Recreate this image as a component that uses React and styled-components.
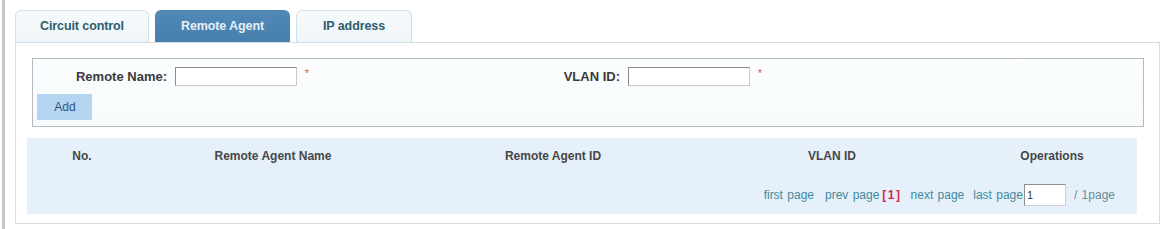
import React from "react";
import styled, { createGlobalStyle } from "styled-components";

const Global = createGlobalStyle`
  html, body { margin: 0; padding: 0; background: #ffffff; }
  body { font-family: "Liberation Sans", Arial, sans-serif; }
  * { box-sizing: border-box; }
`;

const Page = styled.div`
  margin-left: 2px;
  height: 229px;
  border-left: 3px solid #c6c6c6;
  padding-left: 10px;
  padding-top: 10px;
  width: 1160px;
`;

const TabBar = styled.div`
  display: flex;
  gap: 6px;
`;

const Tab = styled.div`
  width: ${(p) => p.$w}px;
  height: 32px;
  display: flex;
  align-items: center;
  justify-content: center;
  padding-bottom: 1px;
  border: 1px solid ${(p) => (p.$active ? "#4a84b2" : "#d2dfe6")};
  border-bottom: none;
  border-radius: 6px 6px 0 0;
  background: ${(p) =>
    p.$active ? "linear-gradient(#5089b6, #4780ae)" : "linear-gradient(#f6fafc, #eef5f9)"};
  color: ${(p) => (p.$active ? "#e6eef7" : "#2f5d6c")};
  font-size: 12.5px;
  font-weight: bold;
  letter-spacing: -0.1px;
`;

const Panel = styled.div`
  width: 1145px;
  height: 182px;
  border: 1px solid #d5dde2;
  background: #ffffff;
  padding-top: 15px;
`;

const FormBox = styled.div`
  margin-left: 16px;
  width: 1112px;
  height: 69px;
  border: 1px solid #b4bcc0;
  background: linear-gradient(#fbfdfe, #f7fbfc);
  padding: 8px 0 0 0;
`;

const FieldRow = styled.div`
  display: flex;
  align-items: center;
  height: 19px;
`;

const Field = styled.div`
  display: flex;
  align-items: center;
  width: ${(p) => p.$w}px;
`;

const Label = styled.label`
  width: ${(p) => p.$w}px;
  text-align: right;
  margin-right: 8px;
  font-size: 13px;
  font-weight: bold;
  color: #3a3a3a;
`;

const TextInput = styled.input`
  width: 122px;
  height: 19px;
  border: 1px solid #c9c9c9;
  border-top-color: #8c8c8c;
  border-left-color: #8c8c8c;
  background: #ffffff;
  padding: 0 3px;
  font-family: "Liberation Sans", Arial, sans-serif;
  font-size: 11px;
  outline: none;
`;

const Required = styled.span`
  margin-left: 8px;
  color: #e04848;
  font-size: 10px;
  align-self: flex-start;
  margin-top: 1px;
`;

const AddButton = styled.button`
  margin: 8px 0 0 4px;
  width: 55px;
  height: 26px;
  border: none;
  background: #b4d4f1;
  color: #2d5583;
  font-family: "Liberation Sans", Arial, sans-serif;
  font-size: 12px;
  padding: 0 0 0 1px;
  display: block;
`;

const ListBox = styled.div`
  margin: 11px 0 0 11px;
  width: 1110px;
  height: 76px;
  background: #e5f0fa;
`;

const HeadRow = styled.div`
  display: grid;
  grid-template-columns: 110px 272px 288px 270px 170px;
  height: 36px;
  align-items: center;
`;

const HeadCell = styled.div`
  text-align: center;
  font-size: 12px;
  font-weight: bold;
  color: #474747;
`;

const Pager = styled.div`
  display: flex;
  justify-content: flex-end;
  align-items: center;
  height: 40px;
  padding-right: 22px;
  padding-top: 2px;
  font-size: 12px;
  color: #3f8b9c;
`;

const PagerLink = styled.span`
  margin-left: ${(p) => p.$ml || 0}px;
  word-spacing: 1px;
`;

const Current = styled.span`
  margin-left: 3px;
  color: #d8284a;
  font-weight: bold;
  font-size: 12px;
  letter-spacing: 1.5px;
`;

const PageInput = styled.input`
  margin-left: 1px;
  width: 42px;
  height: 22px;
  border: 1px solid #cfcfcf;
  border-top-color: #8e8e8e;
  border-left-color: #8e8e8e;
  padding: 0 2px;
  font-family: "Liberation Sans", Arial, sans-serif;
  font-size: 11px;
  color: #333;
  outline: none;
  background: #fff;
`;

const PageTotal = styled.span`
  margin-left: 8px;
  color: #6a8d98;
  word-spacing: 1px;
`;

export default function App() {
  return (
    <>
      <Global />
      <Page>
        <TabBar>
          <Tab $w={134}>Circuit control</Tab>
          <Tab $w={135} $active>
            Remote Agent
          </Tab>
          <Tab $w={116}>IP address</Tab>
        </TabBar>
        <Panel>
          <FormBox>
            <FieldRow>
              <Field $w={395}>
                <Label $w={134}>Remote Name:</Label>
                <TextInput />
                <Required>*</Required>
              </Field>
              <Field $w={400}>
                <Label $w={192}>VLAN ID:</Label>
                <TextInput />
                <Required>*</Required>
              </Field>
            </FieldRow>
            <AddButton>Add</AddButton>
          </FormBox>
          <ListBox>
            <HeadRow>
              <HeadCell>No.</HeadCell>
              <HeadCell>Remote Agent Name</HeadCell>
              <HeadCell>Remote Agent ID</HeadCell>
              <HeadCell>VLAN ID</HeadCell>
              <HeadCell>Operations</HeadCell>
            </HeadRow>
            <Pager>
              <PagerLink>first page</PagerLink>
              <PagerLink $ml={11}>prev page</PagerLink>
              <Current>[1]</Current>
              <PagerLink $ml={9}>next page</PagerLink>
              <PagerLink $ml={9}>last page</PagerLink>
              <PageInput defaultValue="1" />
              <PageTotal>/ 1page</PageTotal>
            </Pager>
          </ListBox>
        </Panel>
      </Page>
    </>
  );
}
